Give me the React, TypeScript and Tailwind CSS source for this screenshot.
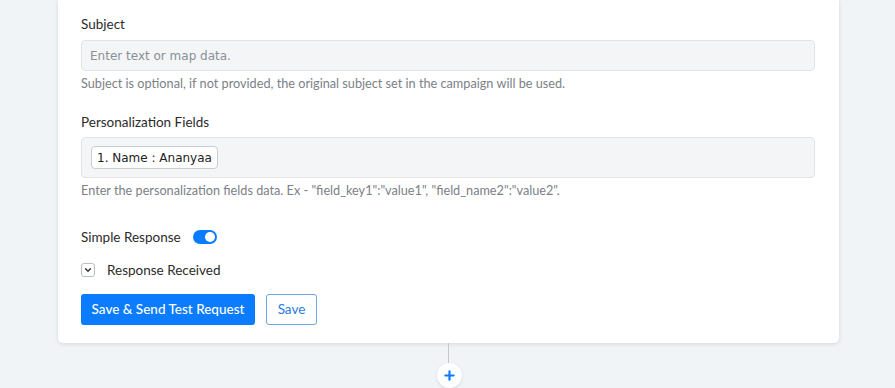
import React from 'react';

const sans = { fontFamily: 'Lato, "Open Sans", sans-serif' };
const mono = { fontFamily: '"DejaVu Sans", Verdana, sans-serif' };

export default function App() {
  return (
    <div className="w-[895px] h-[388px] bg-[#f1f4f7] overflow-hidden relative" style={sans}>
      {/* Card */}
      <div className="ml-[58px] w-[781px] h-[343px] bg-white rounded-b-[5px] shadow-[0_1px_4px_rgba(0,0,0,0.12)] px-[23px] pt-[15px]">
        {/* Subject */}
        <div className="text-[13.5px] leading-[18px] text-[#2b2b2b]">Subject</div>
        <div className="mt-[7px] h-[31px] w-[734px] rounded-[4px] border border-[#e1e4e7] bg-[#f3f5f7] flex items-center px-[8px]">
          <span className="text-[12px] text-[#8a9096]" style={mono}>Enter text or map data.</span>
        </div>
        <div className="mt-[3px] text-[12.7px] leading-[18px] text-[#7b8187]">
          Subject is optional, if not provided, the original subject set in the campaign will be used.
        </div>

        {/* Personalization */}
        <div className="mt-[21px] text-[13.5px] leading-[18px] text-[#2b2b2b]">Personalization Fields</div>
        <div className="mt-[6px] h-[41px] w-[734px] rounded-[4px] border border-[#e1e4e7] bg-[#f3f5f7] flex items-center px-[9px]">
          <span className="h-[23px] px-[5px] rounded-[4px] border border-[#c9cdd1] bg-white flex items-center text-[12px] text-[#222]" style={mono}>
            1. Name : Ananyaa
          </span>
        </div>
        <div className="mt-[3px] text-[12.7px] leading-[18px] text-[#7b8187]">
          Enter the personalization fields data. Ex - "field_key1":"value1", "field_name2":"value2".
        </div>

        {/* Simple Response toggle */}
        <div className="mt-[29px] flex items-center gap-[12px] h-[18px]">
          <span className="text-[13.5px] text-[#2b2b2b]">Simple Response</span>
          <span className="w-[24px] h-[14px] rounded-full bg-[#0a7cff] flex items-center justify-end pr-[2px]">
            <span className="w-[10px] h-[10px] rounded-full bg-white" />
          </span>
        </div>

        {/* Response Received */}
        <div className="mt-[15px] flex items-center h-[18px]">
          <span className="w-[14px] h-[14px] rounded-[3px] border border-[#b9bec4] bg-white flex items-center justify-center">
            <svg width="8" height="8" viewBox="0 0 10 10" fill="none">
              <path d="M2 3.5 L5 6.5 L8 3.5" stroke="#333" strokeWidth="1.8" strokeLinecap="round" strokeLinejoin="round" />
            </svg>
          </span>
          <span className="ml-[12px] text-[13.5px] text-[#2b2b2b]">Response Received</span>
        </div>

        {/* Buttons */}
        <div className="mt-[15px] flex items-center gap-[11px]">
          <button className="h-[31px] w-[174px] rounded-[3px] bg-[#0b7cff] text-white text-[13.5px] font-medium">
            Save &amp; Send Test Request
          </button>
          <button className="h-[31px] w-[51px] rounded-[3px] border border-[#6aa6ea] bg-white text-[#2a7be0] text-[13.5px]">
            Save
          </button>
        </div>
      </div>

      {/* Connector */}
      <div className="absolute left-[448px] top-[343px] w-px h-[22px] bg-[#c4c8cc]" />
      <div className="absolute left-[437px] top-[363px] w-[25px] h-[25px] rounded-full bg-white shadow-[0_1px_3px_rgba(0,0,0,0.12)] flex items-center justify-center">
        <svg width="11" height="11" viewBox="0 0 12 12">
          <path d="M6 1.5 V10.5 M1.5 6 H10.5" stroke="#0b7cff" strokeWidth="2.4" strokeLinecap="round" />
        </svg>
      </div>
    </div>
  );
}
